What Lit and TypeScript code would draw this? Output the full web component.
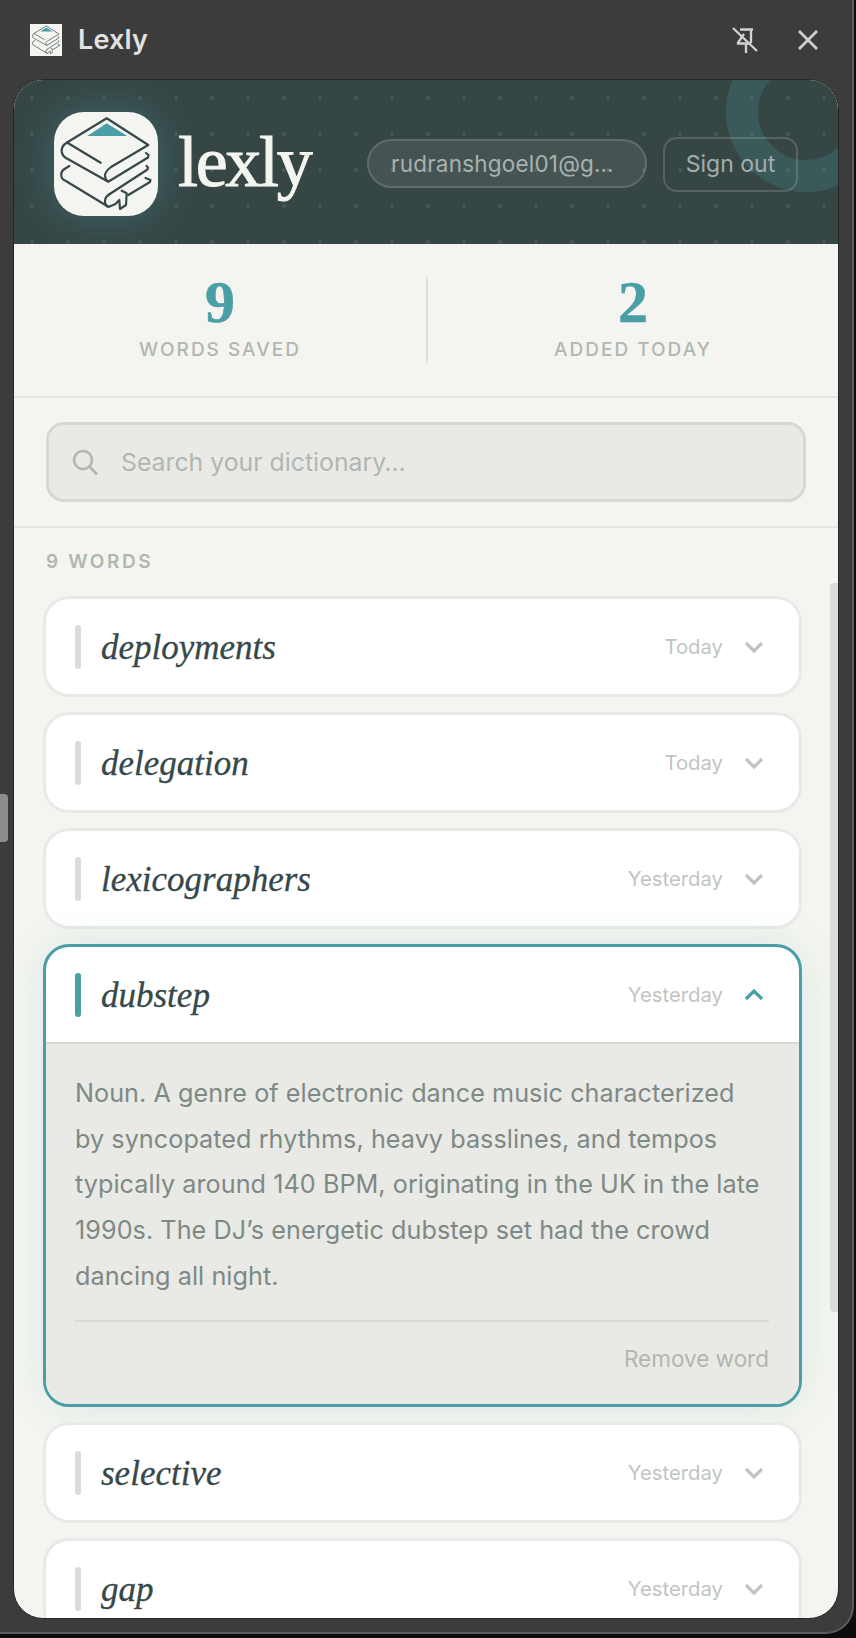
import { LitElement, html, css, svg } from 'lit';
import { customElement, state } from 'lit/decorators.js';
import { classMap } from 'lit/directives/class-map.js';

interface Word {
  word: string;
  date: string;
  meaning?: string;
}

const WORDS: Word[] = [
  { word: 'deployments', date: 'Today' },
  { word: 'delegation', date: 'Today' },
  { word: 'lexicographers', date: 'Yesterday' },
  {
    word: 'dubstep',
    date: 'Yesterday',
    meaning:
      'Noun. A genre of electronic dance music characterized by syncopated rhythms, heavy basslines, and tempos typically around 140 BPM, originating in the UK in the late 1990s. The DJ\u2019s energetic dubstep set had the crowd dancing all night.',
  },
  { word: 'selective', date: 'Yesterday' },
  { word: 'gap', date: 'Yesterday' },
];

const bookMark = svg`
  <polygon points="52.7,11.3 33.3,24 73.3,24" fill="#4a9ea5" />
  <g fill="none" stroke="#36484a" stroke-width="2.2" stroke-linecap="round" stroke-linejoin="round">
    <path d="M46.7 50.7L13 30.5L52.7 6.3L94.3 33L57 55Q50.5 60 51 64Q52 70 55.5 69L94 45.5L94.5 43L92 41" />
    <path d="M13 30.5Q7 34 7.7 40Q8.5 44 12 46L54.3 69.7" />
    <path d="M15.3 54L9 58Q6 62 8 66Q9 68 11 68.5L54.3 94.7" />
    <path d="M55 82.5L93.5 57.5L94 55.5L92.5 54" />
    <path d="M56 82Q50.5 85 51 90Q52 95 55 94.7L61.5 92L65.3 88L66 97L72 93L72.7 81.3L67.7 78.7" />
    <path d="M74.3 83L96 70L96.5 68L91.5 66" />
  </g>
`;

@customElement('app-root')
export class AppRoot extends LitElement {
  static styles = css`
    :host {
      display: block;
      height: 1638px;
      background: #0c0c0c;
      font-family: Inter, 'Liberation Sans', sans-serif;
      position: relative;
      overflow: hidden;
    }

    .window {
      width: 852px;
      height: 1632px;
      background: #3c3c3c;
      border-right: 2px solid #5c5c5c;
      border-bottom: 2px solid #5c5c5c;
      border-bottom-right-radius: 28px;
      display: flex;
      flex-direction: column;
    }

    .titlebar {
      height: 79px;
      flex: none;
      display: flex;
      align-items: center;
      padding: 0 34px 0 30px;
      box-sizing: border-box;
      color: #e2e2e2;
    }

    .app-icon {
      width: 32px;
      height: 32px;
      background: #f4f5f0;
      display: block;
    }

    .app-name {
      font-size: 27px;
      font-weight: 600;
      margin-left: 16px;
      margin-right: auto;
      letter-spacing: 0.2px;
    }

    .title-btn {
      display: block;
      margin-left: 40px;
    }

    .handle {
      position: absolute;
      left: 0;
      top: 794px;
      width: 8px;
      height: 48px;
      border-radius: 0 4px 4px 0;
      background: #8b8e8c;
    }

    .panel {
      position: relative;
      margin-left: 13px;
      width: 824px;
      height: 1538px;
      background: #f4f5f0;
      border: 1px solid #262626;
      border-radius: 30px;
      overflow: hidden;
      display: flex;
      flex-direction: column;
    }

    .hero {
      position: relative;
      overflow: hidden;
      height: 164px;
      flex: none;
      display: flex;
      align-items: center;
      gap: 16px;
      padding: 4px 40px 0;
      box-sizing: border-box;
      background-color: #364645;
      background-image: radial-gradient(circle, rgba(255, 255, 255, 0.09) 1.6px, transparent 2.2px);
      background-size: 36px 36px;
    }

    .ring {
      position: absolute;
      top: -48px;
      right: -48px;
      width: 96px;
      height: 96px;
      border: 32px solid rgba(74, 158, 165, 0.22);
      border-radius: 50%;
    }

    .logo {
      position: relative;
      width: 104px;
      height: 104px;
      flex: none;
      background: #f4f5f0;
      border-radius: 30px;
      box-shadow: 0 0 40px rgba(74, 158, 165, 0.4);
    }

    .logo svg {
      display: block;
    }

    .brand {
      position: relative;
      font-family: 'Liberation Serif', serif;
      font-size: 72px;
      font-weight: 400;
      color: #f4f5f0;
      letter-spacing: -2.3px;
      margin: 0 auto 4px 4px;
      -webkit-text-stroke: 1px #f4f5f0;
    }

    .email {
      position: relative;
      width: 280px;
      height: 49px;
      box-sizing: border-box;
      display: flex;
      align-items: center;
      margin-bottom: 2px;
      padding: 0 22px;
      border: 2px solid rgba(255, 255, 255, 0.14);
      border-radius: 25px;
      background: rgba(255, 255, 255, 0.08);
      color: #a9b1af;
      font-size: 22.5px;
      letter-spacing: 0.2px;
      white-space: nowrap;
    }

    .signout {
      position: relative;
      width: 135px;
      height: 55px;
      box-sizing: border-box;
      display: flex;
      align-items: center;
      justify-content: center;
      border: 2px solid rgba(255, 255, 255, 0.16);
      border-radius: 14px;
      color: #a3aeac;
      font-size: 23px;
    }

    .stats {
      height: 154px;
      flex: none;
      box-sizing: border-box;
      border-bottom: 2px solid #e4e5e1;
      display: flex;
      align-items: center;
    }

    .stat {
      flex: 1;
      height: 86px;
      display: flex;
      flex-direction: column;
      align-items: center;
      justify-content: center;
      text-align: center;
    }

    .stat:first-child {
      flex: none;
      width: 412px;
    }

    .stat + .stat {
      border-left: 2px solid #dfe0dc;
    }

    .num {
      font-family: 'Liberation Serif', serif;
      font-weight: 700;
      font-size: 60px;
      line-height: 48px;
      color: #4a9ea5;
      -webkit-text-stroke: 0.5px #4a9ea5;
    }

    .label {
      font-size: 19px;
      font-weight: 500;
      line-height: 26px;
      letter-spacing: 2px;
      color: #b1b6b1;
      margin-top: 11px;
    }

    .search-wrap {
      height: 130px;
      flex: none;
      box-sizing: border-box;
      border-bottom: 2px solid #e4e5e1;
      padding: 24px 32px 0;
    }

    .search {
      height: 80px;
      box-sizing: border-box;
      background: #e9eae5;
      border: 3px solid #d6d8d2;
      border-radius: 18px;
      display: flex;
      align-items: center;
      padding-left: 22px;
      gap: 22px;
      color: #b1b6b1;
      font-size: 24.8px;
    }

    .list {
      padding: 22px 0 0 29px;
    }

    .count {
      margin-left: 3px;
      font-size: 19px;
      line-height: 24px;
      font-weight: 600;
      letter-spacing: 2.6px;
      color: #b1b6b1;
      margin-bottom: 22px;
    }

    .cards {
      display: flex;
      flex-direction: column;
      gap: 15px;
      width: 759px;
    }

    .card {
      flex: none;
      background: #fff;
      border: 3px solid #e9eae8;
      border-radius: 26px;
      overflow: hidden;
    }

    .card.open {
      border-color: #4a9ea5;
      box-shadow: 0 0 40px rgba(74, 158, 165, 0.14);
    }

    .row {
      height: 95px;
      display: flex;
      align-items: center;
      padding: 0 33px 0 29px;
      cursor: pointer;
    }

    .bar {
      width: 6px;
      height: 44px;
      border-radius: 3px;
      background: #d9dbd9;
      margin-right: 20px;
    }

    .open .bar {
      background: #4a9ea5;
    }

    .word {
      font-family: 'Liberation Serif', serif;
      font-style: italic;
      font-size: 35px;
      color: #36484a;
      margin-right: auto;
      padding-top: 2px;
      -webkit-text-stroke: 0.3px #36484a;
    }

    .date {
      font-size: 20.3px;
      color: #c1c5c2;
      margin-right: 19px;
    }

    .chev {
      display: block;
      color: #c1c5c2;
    }

    .open .chev {
      color: #4a9ea5;
      transform: rotate(180deg);
    }

    .body {
      background: #e9eae5;
      border-top: 2px solid #d8d9d3;
      padding: 27px 30px 0 29px;
      height: 362px;
      box-sizing: border-box;
    }

    .meaning {
      margin: 0;
      max-width: 685px;
      font-size: 25.2px;
      letter-spacing: 0.05px;
      line-height: 45.7px;
      color: #7d8985;
    }

    .actions {
      margin-top: 20px;
      padding-top: 20px;
      border-top: 2px solid #d8d9d3;
      text-align: right;
      font-size: 22.5px;
      line-height: 34px;
      color: #b1b6b1;
    }

    .scroll {
      position: absolute;
      right: 0;
      top: 503px;
      width: 8px;
      height: 729px;
      border-radius: 4px 0 0 4px;
      background: #dadcd7;
    }
  `;

  @state()
  private openWord = 'dubstep';

  private renderCard(item: Word) {
    const open = item.word === this.openWord;
    return html`
      <div class=${classMap({ card: true, open })}>
        <div class="row" @click=${() => (this.openWord = open ? '' : item.word)}>
          <span class="bar"></span>
          <span class="word">${item.word}</span>
          <span class="date">${item.date}</span>
          <svg class="chev" width="24" height="24" viewBox="0 0 24 24" fill="none" stroke="currentColor" stroke-width="3.2">
            <path d="M4 8l8 8l8-8" />
          </svg>
        </div>
        ${open
          ? html`<div class="body">
              <p class="meaning">${item.meaning}</p>
              <div class="actions">Remove word</div>
            </div>`
          : ''}
      </div>
    `;
  }

  render() {
    return html`
      <div class="window">
        <div class="titlebar">
          <svg class="app-icon" viewBox="0 0 104 104">${bookMark}</svg>
          <span class="app-name">Lexly</span>
          <svg class="title-btn" width="26" height="26" viewBox="0 0 26 26" fill="none" stroke="#d2d2d2" stroke-width="2.3">
            <path d="M1 1L25 24" />
            <path d="M8 2.5H21M19 2.5V16M12 7L6 15.5V16.5H19M14 16.5V27" />
          </svg>
          <svg class="title-btn" width="20" height="20" viewBox="0 0 20 20" stroke="#d2d2d2" stroke-width="2.6">
            <path d="M1 1L19 19M19 1L1 19" />
          </svg>
        </div>
        <div class="panel">
          <div class="hero">
            <span class="ring"></span>
            <div class="logo">
              <svg width="104" height="104" viewBox="0 0 104 104">${bookMark}</svg>
            </div>
            <span class="brand">lexly</span>
            <span class="email">rudranshgoel01@g\u2026</span>
            <span class="signout">Sign out</span>
          </div>
          <div class="stats">
            <div class="stat"><span class="num">9</span><span class="label">WORDS SAVED</span></div>
            <div class="stat"><span class="num">2</span><span class="label">ADDED TODAY</span></div>
          </div>
          <div class="search-wrap">
            <div class="search">
              <svg width="28" height="28" viewBox="0 0 28 28" fill="none" stroke="#b1b6b1" stroke-width="2.6">
                <circle cx="12" cy="12" r="9" />
                <path d="M18.5 18.5L26 26.5" />
              </svg>
              <span>Search your dictionary\u2026</span>
            </div>
          </div>
          <div class="list">
            <div class="count">9 WORDS</div>
            <div class="cards">${WORDS.map((w) => this.renderCard(w))}</div>
          </div>
          <div class="scroll"></div>
        </div>
      </div>
      <div class="handle"></div>
    `;
  }
}
